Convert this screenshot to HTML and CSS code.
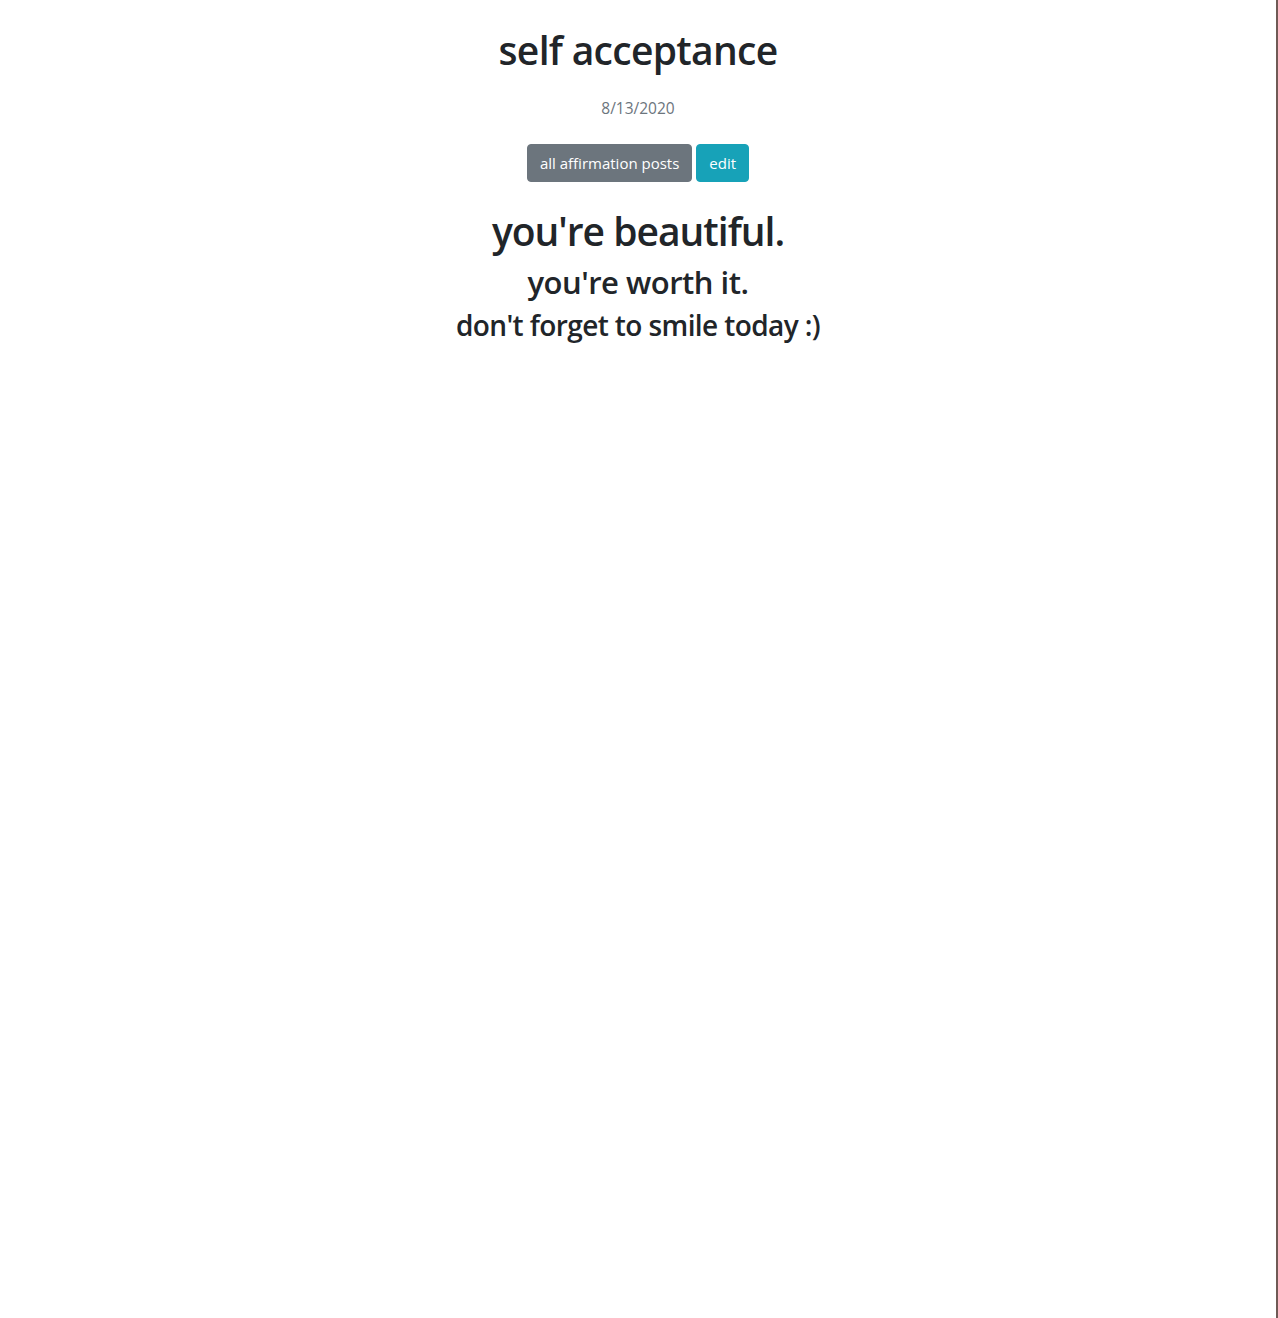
FILE: index.html
```html
<!DOCTYPE html>
<html lang="en">
<head>
<meta charset="utf-8">
<title>self acceptance</title>
<link rel="stylesheet" href="styles.css">
</head>
<body>
<div class="page">
  <div class="post">
    <h1 class="title">self acceptance</h1>
    <p class="date">8/13/2020</p>
    <div class="actions">
      <a class="btn btn-secondary" href="#">all affirmation posts</a>
      <a class="btn btn-info" href="#">edit</a>
    </div>
    <div class="content">
      <h1 class="line1">you're beautiful.</h1>
      <h2 class="line2">you're worth it.</h2>
      <h3 class="line3">don't forget to smile today :)</h3>
    </div>
  </div>
</div>
</body>
</html>
```
FILE: styles.css
```css
html, body {
  margin: 0;
  padding: 0;
  background: #fff;
}
body {
  font-family: "Open Sans", "Noto Sans", sans-serif;
  color: #212529;
  font-size: 16px;
  line-height: 1.5;
}
.page {
  box-sizing: border-box;
  min-height: 1318px;
  border-right: 2px solid #6f5a55;
}
.post {
  text-align: center;
  padding-top: 27px;
}
.title, .line1, .line2, .line3 {
  margin: 0;
  font-weight: 600;
  line-height: 1.2;
}
.title { font-size: 39px; letter-spacing: -0.7px; }
.date {
  margin: 22px 0 0;
  color: #6c757d;
  font-size: 15.5px;
  line-height: 24px;
}
.actions {
  margin-top: 24px;
  display: flex;
  justify-content: center;
  gap: 4px;
}
.btn {
  display: inline-block;
  padding: 6px 12px;
  font-size: 15px;
  line-height: 24px;
  border-radius: 4px;
  color: #fff;
  text-decoration: none;
  border: 1px solid transparent;
}
.btn-secondary { background: #6c757d; border-color: #6c757d; }
.btn-info { background: #17a2b8; border-color: #17a2b8; }
.content {
  margin-top: 26px;
}
.line1 { font-size: 39px; letter-spacing: -1px; }
.line2 { font-size: 31px; letter-spacing: -0.5px; margin-top: 9px; }
.line3 { font-size: 28px; letter-spacing: -0.6px; margin-top: 8px; }
```
